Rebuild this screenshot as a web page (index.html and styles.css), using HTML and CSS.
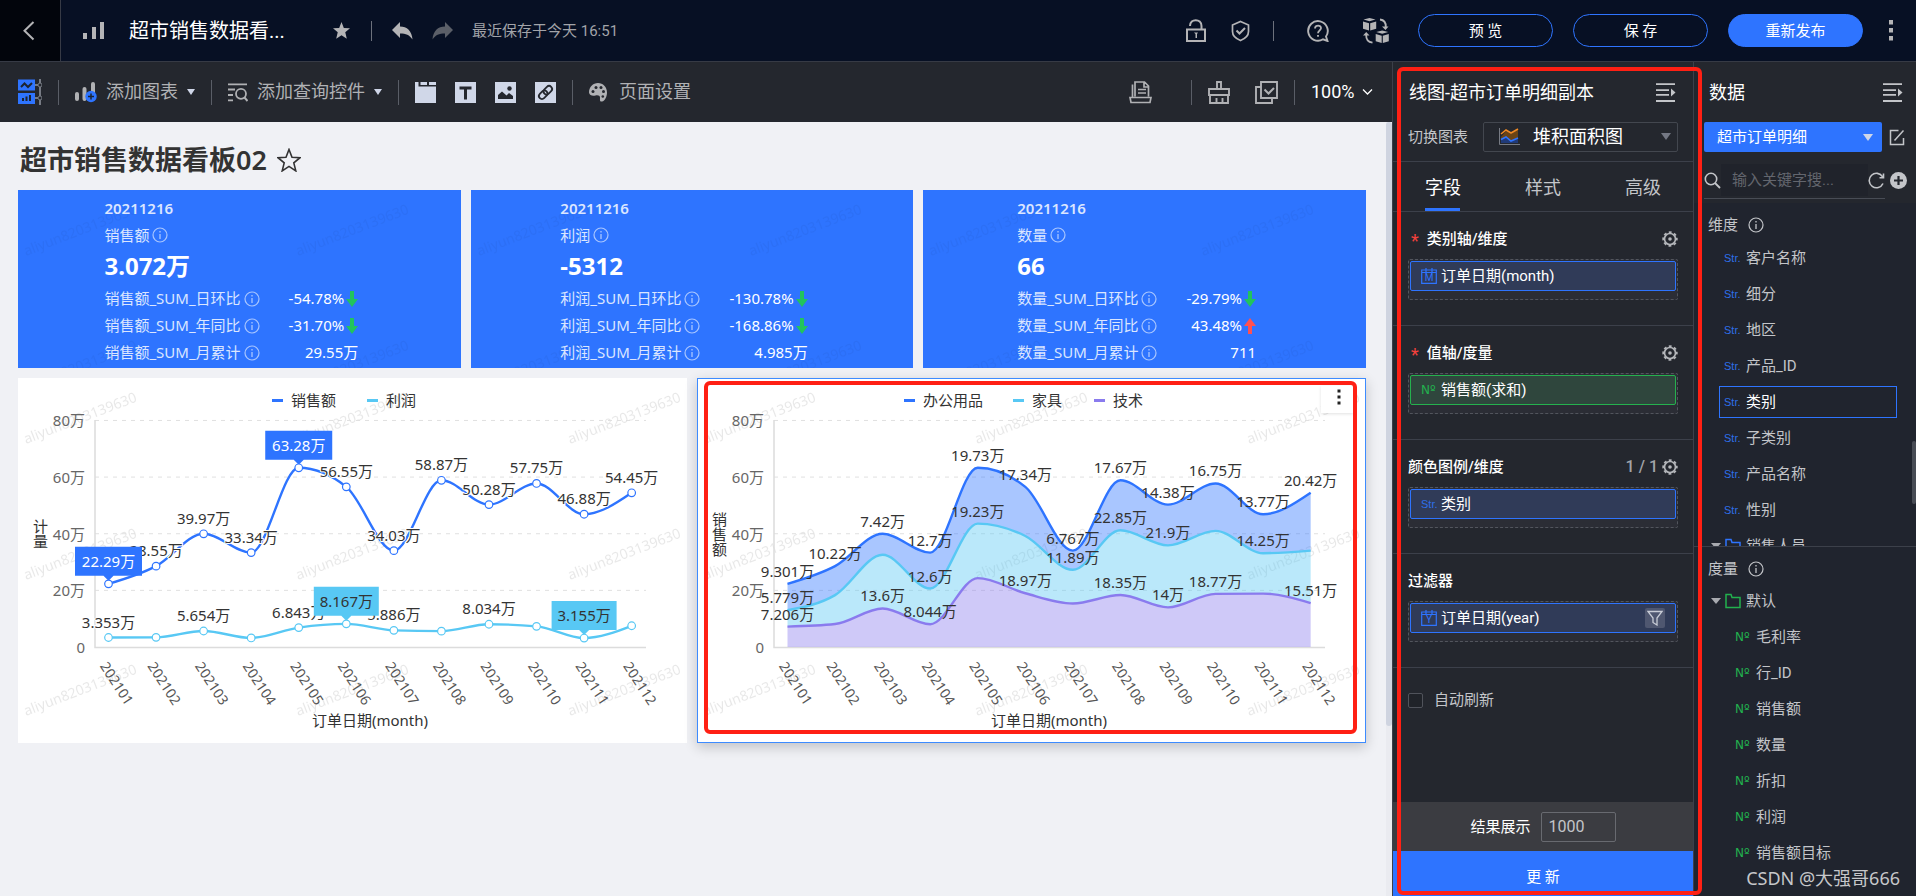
FILE: index.html
```html
<!DOCTYPE html>
<html lang="zh-CN">
<head>
<meta charset="utf-8">
<title>超市销售数据看板</title>
<link rel="stylesheet" href="styles.css">
</head>
<body>
<svg class="defs" width="0" height="0" aria-hidden="true">
  <defs>
    <pattern id="wm" width="272" height="136" patternUnits="userSpaceOnUse"><text class="wm-text" transform="translate(8 66) rotate(-21)">aliyun8203139630</text></pattern>
    <symbol id="info" viewBox="0 0 16 16"><circle cx="8" cy="8" r="7" fill="none" stroke="currentColor" stroke-width="1.200"/><path d="M8 4v1.600M8 7v5" stroke="currentColor" stroke-width="1.300"/></symbol>
    <symbol id="arrow" viewBox="0 0 12 16"><path d="M4 0h4v8h4l-6 8-6-8h4z" fill="currentColor"/></symbol>
    <symbol id="gear" viewBox="0 0 16 16"><circle cx="8" cy="8" r="5.500" fill="none" stroke="currentColor" stroke-width="1.700"/><circle cx="8" cy="8" r="6.800" fill="none" stroke="currentColor" stroke-width="1.800" stroke-dasharray="2.900 2.440" stroke-dashoffset="1.450"/><circle cx="8" cy="8" r="1.800" fill="currentColor"/></symbol>
    <symbol id="collapse" viewBox="0 0 20 20"><path d="M0 1.200h19M0 7.200h13M0 11.800h13M0 18h19" stroke="currentColor" stroke-width="1.800"/><path d="M15 5.500v8l4.500-4z" fill="currentColor"/></symbol>
    <symbol id="folder" viewBox="0 0 16 16"><path d="M1 14.500V1.500h5l1 3h8v10z" fill="none" stroke="currentColor" stroke-width="1.500"/></symbol>
  </defs>
</svg>
<div class="app">
  <header class="topbar">
    <button class="back" aria-label="返回"><svg width="14" height="20" viewBox="0 0 14 20"><path d="M11.500 1 2.500 9.800l9 8.700" fill="none" stroke="currentColor" stroke-width="2"/></svg></button>
    <svg class="bars" width="22" height="18" viewBox="0 0 22 18"><path d="M0 11h4v6H0zM9 5h4v12H9zM17 0h4v17h-4z" fill="currentColor"/></svg>
    <h1 class="doc-title">超市销售数据看...</h1>
    <svg class="fav" width="17" height="17" viewBox="0 0 24 24"><path d="m12 0 3.300 8.300 8.700.6-6.700 5.700L19.500 23.500 12 18.600 4.500 23.500l2.200-8.900L0 8.900l8.700-.6z" fill="currentColor"/></svg>
    <span class="rule"></span>
    <div class="history">
      <button aria-label="撤销"><svg width="21" height="18" viewBox="0 0 21 18"><path d="M8 0v4.500c7 0 12 4.500 12.500 13C17.500 13 14 11.500 8 11.500V16L0 8z" fill="currentColor"/></svg></button>
      <button class="dim" aria-label="重做"><svg width="21" height="18" viewBox="0 0 21 18"><path d="M13 0v4.500C6 4.500 1 9 .5 17.500 3.500 13 7 11.500 13 11.500V16l8-8z" fill="currentColor"/></svg></button>
    </div>
    <span class="saved">最近保存于今天 16:51</span>
    <div class="top-right">
      <div class="top-icons">
        <svg width="20" height="23" viewBox="0 0 20 23"><path d="M1 10.500h18v11.500H1zM4 7C4 -.8 15.500 -.8 15.500 7v3" fill="none" stroke="currentColor" stroke-width="2"/><path d="M8 13.500h4L11 15v4H9.500v-4z" fill="currentColor"/></svg>
        <svg width="19" height="22" viewBox="0 0 19 22"><path d="M9.500 1.500 17.500 5v6.500c0 4-3 7-8 9-5-2-8-5-8-9V5z" fill="none" stroke="currentColor" stroke-width="1.700"/><path d="m5.500 10.500 3 3 5.500-5.500" fill="none" stroke="currentColor" stroke-width="2"/></svg>
      </div>
      <span class="rule"></span>
      <svg class="help" width="22" height="22" viewBox="0 0 22 22"><path d="M19 16.500A9.800 9.800 0 1 0 16 19.300L20.500 21z" fill="none" stroke="currentColor" stroke-width="1.900"/><path d="M8 8.500C8 4.500 14.200 4.700 14 8.300 13.900 10.200 11 10.600 11 13.200M11 15v1.800" fill="none" stroke="currentColor" stroke-width="1.800"/></svg>
      <svg class="cubes" width="26" height="26" viewBox="0 0 26 26"><path d="m6.500 0 6 1.500-6 1.800L.5 1.500zM0 3.500 6 5.200v7.300L0 10.800zM7.200 5.200l6-1.700v7.300l-6 1.700zM19.200 12.500l6 1.500-6 1.800-6-1.800zM12.700 16l6 1.700V25l-6-1.700zM19.800 17.700l6-1.700v7.300l-6 1.700zM19 8.500h6.500L22.500 12zM0 17.500h6.500L3.200 14z" fill="currentColor"/><path d="M17 1.500c4 .5 6 3 5.800 7.500M9.500 24.700C5 24 3 21.500 3.200 17" fill="none" stroke="currentColor" stroke-width="1.800"/></svg>
      <div class="actions">
        <button class="pill">预 览</button>
        <button class="pill">保 存</button>
        <button class="pill pill-main">重新发布</button>
      </div>
      <button class="more" aria-label="更多"><svg width="8" height="21" viewBox="0 0 8 21"><path d="M2 0h4v4.500H2zM2 8h4v4.500H2zM2 16h4v4.500H2z" fill="currentColor"/></svg></button>
    </div>
  </header>

  <div class="workspace">
    <main class="editor">
      <div class="toolbar">
        <svg width="24" height="26" viewBox="0 0 24 26"><path d="M0 .5h17v11H0zM0 14h17v11H0z" fill="#2e74ff"/><path d="m3 8 3.500-3.500L10 8l4-4M5 22v-3M8.500 22v-4.500M12 22v-6" fill="none" stroke="#1c2430" stroke-width="2"/><path d="M22 0v26M17 6h3M17 19h3" stroke="#777b84" stroke-width="2"/><circle cx="22" cy="6" r="2" fill="#24272e" stroke="#777b84"/><circle cx="22" cy="19" r="2" fill="#24272e" stroke="#777b84"/></svg>
        <span class="rule"></span>
        <button class="tool">
          <svg width="22" height="21" viewBox="0 0 22 21"><path d="M2 12v5M9.500 7v10M18 2v9" stroke="currentColor" stroke-width="4" stroke-linecap="round"/><circle cx="16" cy="14.500" r="5.700" fill="#2e74ff"/><path d="M16 11.500v6M13 14.500h6" stroke="#1c2430" stroke-width="1.500"/></svg>
          添加图表<i class="caret"></i></button>
        <span class="rule"></span>
        <button class="tool">
          <svg width="20" height="19" viewBox="0 0 20 19"><path d="M0 1.300h19M0 6.500h7M0 12h5M0 17.300h5" stroke="currentColor" stroke-width="1.800"/><circle cx="13" cy="10.800" r="5" fill="none" stroke="currentColor" stroke-width="1.800"/><path d="m16.500 14.500 3 3.500" stroke="currentColor" stroke-width="2"/></svg>
          添加查询控件<i class="caret"></i></button>
        <span class="rule"></span>
        <div class="widgets">
          <button aria-label="标签页"><svg width="21" height="21" viewBox="0 0 21 21"><path d="M0 0h3.500v4.500H21V21H0zM5.500 0H12v3H5.500zM14 0h7v3h-7z" fill="currentColor"/></svg></button>
          <button aria-label="文本"><svg width="21" height="21" viewBox="0 0 21 21"><path d="M0 0h21v21H0z" fill="currentColor"/><path d="M4.500 6h12M10.500 6v11.500" stroke="#24272e" stroke-width="3"/></svg></button>
          <button aria-label="图片"><svg width="21" height="21" viewBox="0 0 21 21"><path d="M0 0h21v21H0z" fill="currentColor"/><path d="m3 17 0-4 4-3.500 4.500 4L14 11l4 3v3z" fill="#24272e"/><circle cx="14.500" cy="6.500" r="2.200" fill="#24272e"/></svg></button>
          <button aria-label="链接"><svg width="21" height="21" viewBox="0 0 21 21"><path d="M0 0h21v21H0z" fill="currentColor"/><g transform="rotate(-45 10.500 10.500)" fill="none" stroke="#24272e" stroke-width="1.800"><rect x="2.500" y="7.500" width="9.500" height="6" rx="3"/><rect x="9" y="7.500" width="9.500" height="6" rx="3"/></g></svg></button>
        </div>
        <span class="rule"></span>
        <button class="tool tool-page">
          <svg width="18" height="19" viewBox="0 0 18 19"><path d="M9 0c5 0 9 4 9 9.500 0 4-2 8.500-5 9-2.500.500-2-2-2-4s-2-2.500-4.500-2-6 .500-6.500-3C0 4 4 0 9 0z" fill="currentColor"/><g fill="#24272e"><circle cx="4" cy="8.500" r="1.500"/><circle cx="7" cy="4.500" r="1.500"/><circle cx="12" cy="4.500" r="1.500"/><circle cx="14.500" cy="8.500" r="1.500"/><circle cx="13.800" cy="13.500" r="1.300"/></g></svg>
          页面设置</button>
        <div class="tools-right">
          <svg class="doc-icon" width="23" height="23" viewBox="0 0 23 23"><path d="M3.500 16V3.500M6 15.500V1h9.500L19.500 5v10.500M15 1v5h4.500M1 16.500h21l-1 5H2zM9 8.500h8M9 12h8" fill="none" stroke="currentColor" stroke-width="1.700"/></svg>
          <span class="rule"></span>
          <svg width="22" height="23" viewBox="0 0 22 23"><path d="M9 8V1h4v7M1 8h20v6H1zM2 14v8h18v-8M8.500 22v-5M14.500 22v-5" fill="none" stroke="currentColor" stroke-width="1.900"/></svg>
          <svg class="stack-icon" width="23" height="23" viewBox="0 0 23 23"><path d="M6 1h16v16H6zM6 6H1v16h16v-5" fill="none" stroke="currentColor" stroke-width="1.900"/><path d="m9.500 8.500 4 4L19 7" fill="none" stroke="currentColor" stroke-width="2"/></svg>
          <span class="rule"></span>
          <span class="zoom"><select aria-label="缩放"><option>100%</option></select><svg width="11" height="8" viewBox="0 0 11 8"><path d="m1 1.500 4.500 4.500L10 1.500" fill="none" stroke="currentColor" stroke-width="1.300"/></svg></span>
        </div>
      </div>

      <div class="canvas">
        <div class="board">
          <h2 class="board-title">超市销售数据看板02 <svg width="24" height="24" viewBox="0 0 24 24"><path d="m12 1.500 3 7.700 8 .5-6.200 5.200 2 8L12 18.400l-6.800 4.500 2-8L1 9.700l8-.5z" fill="none" stroke="currentColor" stroke-width="1.600"/></svg></h2>
          <section class="kpis">
            <article class="kpi">
              <svg class="wm wm-dark"><rect width="100%" height="100%" fill="url(#wm)"/></svg>
              <div class="kpi-body">
                <p class="kpi-date">20211216</p>
                <p class="kpi-name">销售额 <svg class="info"><use href="#info"/></svg></p>
                <p class="kpi-value">3.072万</p>
                <dl class="kpi-rows">
                  <dt>销售额_SUM_日环比 <svg class="info"><use href="#info"/></svg></dt><dd>-54.78%<svg class="down"><use href="#arrow"/></svg></dd>
                  <dt>销售额_SUM_年同比 <svg class="info"><use href="#info"/></svg></dt><dd>-31.70%<svg class="down"><use href="#arrow"/></svg></dd>
                  <dt>销售额_SUM_月累计 <svg class="info"><use href="#info"/></svg></dt><dd>29.55万</dd>
                </dl>
              </div>
            </article>
            <article class="kpi">
              <svg class="wm wm-dark"><rect width="100%" height="100%" fill="url(#wm)"/></svg>
              <div class="kpi-body">
                <p class="kpi-date">20211216</p>
                <p class="kpi-name">利润 <svg class="info"><use href="#info"/></svg></p>
                <p class="kpi-value">-5312</p>
                <dl class="kpi-rows">
                  <dt>利润_SUM_日环比 <svg class="info"><use href="#info"/></svg></dt><dd>-130.78%<svg class="down"><use href="#arrow"/></svg></dd>
                  <dt>利润_SUM_年同比 <svg class="info"><use href="#info"/></svg></dt><dd>-168.86%<svg class="down"><use href="#arrow"/></svg></dd>
                  <dt>利润_SUM_月累计 <svg class="info"><use href="#info"/></svg></dt><dd>4.985万</dd>
                </dl>
              </div>
            </article>
            <article class="kpi">
              <svg class="wm wm-dark"><rect width="100%" height="100%" fill="url(#wm)"/></svg>
              <div class="kpi-body">
                <p class="kpi-date">20211216</p>
                <p class="kpi-name">数量 <svg class="info"><use href="#info"/></svg></p>
                <p class="kpi-value">66</p>
                <dl class="kpi-rows">
                  <dt>数量_SUM_日环比 <svg class="info"><use href="#info"/></svg></dt><dd>-29.79%<svg class="down"><use href="#arrow"/></svg></dd>
                  <dt>数量_SUM_年同比 <svg class="info"><use href="#info"/></svg></dt><dd>43.48%<svg class="up"><use href="#arrow"/></svg></dd>
                  <dt>数量_SUM_月累计 <svg class="info"><use href="#info"/></svg></dt><dd>711</dd>
                </dl>
              </div>
            </article>
          </section>
          <section class="charts">
            <article class="chart-card"><svg id="line-chart" class="chart" viewBox="0 0 669 365" role="img" aria-label="销售额与利润"></svg></article>
            <article class="chart-card is-active"><svg id="area-chart" class="chart" viewBox="0 0 669 365" role="img" aria-label="堆积面积图"></svg>
              <button class="card-more" aria-label="更多操作"><svg width="4" height="16" viewBox="0 0 4 16"><path d="M.5.500h3v3h-3zM.5 6.500h3v3h-3zM.5 12.500h3v3h-3z" fill="#222"/></svg></button>
              <span class="mark mark-chart"></span>
            </article>
          </section>
        </div>
        <div class="scroll"><span class="thumb"></span></div>
      </div>
    </main>

    <aside class="config">
      <div class="panel-head"><h3>线图-超市订单明细副本</h3><svg width="20" height="20"><use href="#collapse"/></svg></div>
      <div class="switch">
        <label for="chart-type">切换图表</label>
        <span class="type-select">
          <svg class="type-icon" width="21" height="17" viewBox="0 0 21 17"><path d="M2 9l5-6 5 3 7-5v9l-7 3-5-4-5 4z" fill="#6b4415"/><path d="M2 12l5-3 5 4 7-3v5H2z" fill="#203a78"/><path d="M2 6l5-4 5 3 7-4" fill="none" stroke="#f08a24" stroke-width="1.600"/><path d="m2 11.500 5-2.500 5 4 7-3" fill="none" stroke="#2e74ff" stroke-width="1.600"/><path d="M.5 0v16.500H21" fill="none" stroke="#777b84"/></svg>
          <select id="chart-type"><option>堆积面积图</option></select><i class="caret"></i>
        </span>
      </div>
      <nav class="tabs"><button class="tab on">字段</button><button class="tab">样式</button><button class="tab">高级</button></nav>
      <section class="field">
        <h4><b class="req">*</b>类别轴/维度<svg class="gear"><use href="#gear"/></svg></h4>
        <div class="drop"><div class="chip"><svg class="date" width="16" height="16" viewBox="0 0 16 16"><path d="M.700 2h14.600v13.300H.700zM1 4.500h14M5 0v4M11 0v4" fill="none" stroke="currentColor" stroke-width="1.200"/><text x="8" y="13">M</text></svg>订单日期(month)</div></div>
      </section>
      <section class="field">
        <h4><b class="req">*</b>值轴/度量<svg class="gear"><use href="#gear"/></svg></h4>
        <div class="drop"><div class="chip chip-green"><span class="no">Nº</span>销售额(求和)</div></div>
      </section>
      <section class="field">
        <h4>颜色图例/维度<span class="count">1 / 1</span><svg class="gear"><use href="#gear"/></svg></h4>
        <div class="drop"><div class="chip"><span class="str">Str.</span>类别</div></div>
      </section>
      <section class="field">
        <h4>过滤器</h4>
        <div class="drop"><div class="chip"><svg class="date" width="16" height="16" viewBox="0 0 16 16"><path d="M.700 2h14.600v13.300H.700zM1 4.500h14M5 0v4M11 0v4" fill="none" stroke="currentColor" stroke-width="1.200"/><text x="8" y="13">Y</text></svg>订单日期(year)<button class="funnel" aria-label="筛选"><svg width="16" height="16" viewBox="0 0 16 16"><path d="M1 1.500h14L10 8v7l-4-2.500V8z" fill="none" stroke="currentColor" stroke-width="1.300"/></svg></button></div></div>
      </section>
      <label class="auto"><input type="checkbox">自动刷新</label>
      <div class="result"><label for="rows">结果展示</label><input id="rows" type="text" value="1000"></div>
      <button class="update">更 新</button>
      <span class="mark mark-config"></span>
    </aside>

    <aside class="data">
      <div class="panel-head"><h3>数据</h3><svg width="20" height="20"><use href="#collapse"/></svg></div>
      <div class="source">
        <span class="source-select"><select aria-label="数据集"><option>超市订单明细</option></select><i class="caret"></i></span>
        <button aria-label="编辑"><svg width="17" height="17" viewBox="0 0 17 17"><path d="M9.500 1.500H1.500v14h13V9" fill="none" stroke="currentColor" stroke-width="1.500"/><path d="M5.500 11.500 14.500 1.500" stroke="currentColor" stroke-width="1.500"/></svg></button>
      </div>
      <div class="search">
        <span class="search-box"><svg width="17" height="17" viewBox="0 0 17 17"><circle cx="7" cy="7" r="5.700" fill="none" stroke="currentColor" stroke-width="1.600"/><path d="m11 11 5 5" stroke="currentColor" stroke-width="1.800"/></svg>
        <input type="text" aria-label="搜索字段" placeholder="输入关键字搜...">
        <svg width="17" height="17" viewBox="0 0 17 17"><path d="M14.600 4.800A7.200 7.200 0 1 0 15 11.500M15.500 1.500v4.200h-4" fill="none" stroke="currentColor" stroke-width="1.600"/></svg></span>
        <button aria-label="新建"><svg width="17" height="17" viewBox="0 0 17 17"><circle cx="8.500" cy="8.500" r="8.500" fill="currentColor"/><path d="M8.500 4v9M4 8.500h9" stroke="#24272e" stroke-width="2.200"/></svg></button>
      </div>
      <section class="dims">
        <h4>维度<svg class="info"><use href="#info"/></svg></h4>
        <ul>
          <li><span class="str">Str.</span>客户名称</li>
          <li><span class="str">Str.</span>细分</li>
          <li><span class="str">Str.</span>地区</li>
          <li><span class="str">Str.</span>产品_ID</li>
          <li class="on"><span class="str">Str.</span>类别</li>
          <li><span class="str">Str.</span>子类别</li>
          <li><span class="str">Str.</span>产品名称</li>
          <li><span class="str">Str.</span>性别</li>
          <li class="folder"><i class="caret"></i><svg class="fold-blue" width="16" height="16"><use href="#folder"/></svg>销售人员</li>
        </ul>
        <span class="list-thumb"></span>
      </section>
      <section class="measures">
        <h4>度量<svg class="info"><use href="#info"/></svg></h4>
        <ul>
          <li class="folder"><i class="caret"></i><svg class="fold-green" width="16" height="16"><use href="#folder"/></svg>默认</li>
          <li><span class="no">Nº</span>毛利率</li>
          <li><span class="no">Nº</span>行_ID</li>
          <li><span class="no">Nº</span>销售额</li>
          <li><span class="no">Nº</span>数量</li>
          <li><span class="no">Nº</span>折扣</li>
          <li><span class="no">Nº</span>利润</li>
          <li><span class="no">Nº</span>销售额目标</li>
        </ul>
        <p class="credit">CSDN @大强哥666</p>
      </section>
    </aside>
  </div>
</div>
<script src="charts.js"></script>
</body>
</html>
```

FILE: styles.css
```css
* { box-sizing: border-box; }
body { margin: 0; font: 15px/20px Roboto, "Noto Sans CJK SC", sans-serif; color: #c3c5c9; background: #24272e; }
h1, h2, h3, h4, p, dl, dd, ul { margin: 0; padding: 0; font-weight: 400; }
ul { list-style: none; }
svg { display: block; flex: none; }
button { margin: 0; padding: 0; border: 0; background: none; color: inherit; font: inherit; cursor: pointer; }
select, input { font: inherit; color: inherit; }
select { appearance: none; border: 0; background: none; padding: 0; }
.defs { position: absolute; }
.app { display: flex; flex-direction: column; height: 100vh; overflow: hidden; }
.rule { flex: none; width: 1px; height: 20px; background: #6c717c; }
.caret { flex: none; border: 5px solid transparent; border-top: 7px solid #cfd6e8; border-bottom: 0; }

.topbar { display: flex; align-items: center; flex: none; height: 62px; background: #071024; border-bottom: 1px solid #363a45; color: #b4b4b6; }
.back { display: flex; align-items: center; justify-content: center; width: 61px; height: 61px; padding-right: 3px; background: #02050c; border-right: 1px solid #363a45; }
.bars { margin-left: 22px; }
.doc-title { margin-left: 24px; width: 204px; font-size: 20px; line-height: 28px; color: #fff; }
.fav { margin-right: 21px; }
.history { display: flex; gap: 19px; margin: 0 19px 0 20px; }
.history .dim { color: #5b5f68; }
.saved { color: #a2a4a9; }
.top-right { display: flex; align-items: center; margin-left: auto; padding-right: 21px; }
.top-icons { display: flex; align-items: center; gap: 25px; margin-right: 23px; }
.help { margin: 0 34px 0 33px; }
.actions { display: flex; gap: 20px; margin: 0 24px 0 29px; }
.pill { width: 135px; height: 33px; border: 1px solid #2e74ff; border-radius: 17px; color: #fff; }
.pill-main { background: #2e74ff; }

.workspace { display: flex; flex: 1; min-height: 0; }
.editor { display: flex; flex-direction: column; flex: 1; min-width: 0; }
.toolbar { display: flex; align-items: center; flex: none; height: 60px; padding: 0 19px 0 18px; color: #b0b1b4; }
.toolbar .rule { height: 25px; margin: 0 16px; background: #5a5e67; }
.toolbar .caret { border-width: 6px 4px 0; }
.tool { display: flex; align-items: center; gap: 9px; font-size: 18px; line-height: 24px; white-space: nowrap; }
.tool-page { gap: 12px; }
.widgets { display: flex; gap: 19px; color: #d0d7e8; }
.tools-right { display: flex; align-items: center; margin-left: auto; }
.doc-icon { margin-right: 23px; }
.stack-icon { margin-left: 25px; }
.zoom { display: flex; align-items: center; gap: 3px; width: 62px; color: #fff; font-size: 18px; }
.zoom select { width: 48px; }

.canvas { display: flex; flex: 1; min-height: 0; background: #f0f1f5; font-family: "Noto Sans", "Noto Sans CJK SC", sans-serif; }
.board { flex: 1; min-width: 0; padding: 0 20px 0 18px; }
.scroll { flex: none; width: 6px; background: #eaebf0; }
.thumb { display: block; height: 78%; border-radius: 3px; background: #cfd4e0; }
.board-title { display: flex; align-items: center; gap: 10px; height: 68px; padding: 8px 0 0 2px; font-size: 27px; line-height: 36px; font-weight: 600; color: #333; }
.kpis { display: grid; grid-template-columns: repeat(3, 1fr); gap: 10px; }
.kpi { position: relative; height: 178px; display: flex; justify-content: center; padding: 7px 16px 6px 0; background: #2e74ff; color: #fff; overflow: hidden; }
.wm { position: absolute; inset: 0; width: 100%; height: 100%; }
.wm-dark { opacity: .4; }
.wm-text { font: 14px "Noto Sans", sans-serif; fill: #000; fill-opacity: .09; }
.kpi-body { position: relative; overflow: hidden; }
.kpi-date { line-height: 22px; font-weight: 600; color: #dbe6ff; }
.kpi-name { display: flex; align-items: center; gap: 3px; line-height: 32px; color: #dbe6ff; }
.kpi-value { font-size: 24px; line-height: 30px; font-weight: 700; }
.kpi-rows { display: grid; grid-template-columns: auto auto; column-gap: 29px; padding-top: 4px; line-height: 27px; }
.kpi-rows dt { display: flex; align-items: center; gap: 3px; color: #dbe6ff; }
.kpi-rows dd { display: flex; align-items: center; justify-content: flex-end; gap: 2px; }
.info { width: 16px; height: 16px; }
.kpi .info { color: #a9c6ff; }
.down, .up { width: 12px; height: 16px; color: #22c35e; }
.up { color: #ff5050; transform: rotate(180deg); }

.charts { display: grid; grid-template-columns: 1fr 1fr; gap: 10px; margin-top: 10px; }
.chart-card { position: relative; background: #fff; }
.chart-card.is-active { outline: 1px solid #3d8bff; outline-offset: -1px; box-shadow: 0 4px 12px rgba(0, 0, 0, .2); }
.chart { width: 100%; height: auto; font-size: 15px; }
.chart text { fill: #333; text-anchor: middle; }
.chart .start { text-anchor: start; }
.chart .y-tick { text-anchor: end; fill: #666; }
.chart .x-tick { text-anchor: start; fill: #555; font-size: 14px; }
.chart .y-name { writing-mode: vertical-rl; }
.chart .halo { stroke: #fff; stroke-width: 2px; paint-order: stroke; }
.chart .on-blue { fill: #fff; }
.card-more { position: absolute; right: 13px; top: 8px; width: 32px; height: 27px; padding-left: 3px; padding-bottom: 6px; display: flex; align-items: center; justify-content: center; background: #fff; box-shadow: 0 1px 3px rgba(0, 0, 0, .12); }
.mark { position: absolute; border: 4px solid #ff2014; border-radius: 6px; pointer-events: none; z-index: 2; }
.mark-chart { inset: 3px 9px 9px 7px; }
.mark-config { inset: 5px -9px 1px 4px; }

.config { position: relative; display: flex; flex-direction: column; flex: none; width: 301px; border-left: 1px solid #3c404a; background: #24272e; }
.panel-head { display: flex; align-items: center; justify-content: space-between; height: 60px; padding: 1px 17px 0 16px; }
.panel-head h3 { font-size: 18px; color: #fff; }
.switch { display: flex; align-items: center; justify-content: space-between; height: 40px; padding: 0 15px 10px; border-bottom: 1px solid #3c404a; }
.type-select { position: relative; display: flex; align-items: center; width: 195px; height: 30px; padding: 0 6px 0 15px; gap: 13px; border: 1px solid #43474f; border-radius: 2px; color: #fff; font-size: 18px; }
.type-select select { flex: 1; min-width: 0; }
.type-select .caret { border-top-color: #747884; }
.tabs { display: flex; height: 50px; border-bottom: 1px solid #3c404a; }
.tab { position: relative; flex: 1; padding-top: 2px; font-size: 18px; }
.tab.on { color: #fff; }
.tab.on::after { content: ""; position: absolute; left: 50%; bottom: 0; width: 35px; height: 3px; margin-left: -18px; background: #2e74ff; }
.field { height: 114px; padding: 17px 15px 0; border-bottom: 1px solid #3c404a; }
.field h4 { display: flex; align-items: center; height: 20px; color: #fff; font-weight: 500; }
.req { margin: 3px 8px 0 3px; font-size: 18px; font-weight: 400; color: #f5413c; }
.gear { width: 16px; height: 16px; margin-left: auto; color: #b4b6ba; }
.count { margin-left: auto; font-size: 16px; color: #a2a4a9; }
.count + .gear { margin-left: 4px; }
.drop { height: 41px; margin-top: 10px; padding: 1px; border: 1px dashed #52555d; border-radius: 2px; background: #2b2d35; }
.chip { display: flex; align-items: center; gap: 4px; height: 30px; padding: 0 10px; border: 1px solid #2e74ff; border-radius: 2px; background: #303b58; color: #fff; }
.chip-green { border-color: #25b14e; background: #2f463d; }
.date { color: #2e74ff; }
.date text { font: 10px Roboto, sans-serif; text-anchor: middle; fill: #2e74ff; }
.str, .no { flex: none; width: 18px; font: 11px/16px "Liberation Sans", sans-serif; color: #2e6fe8; white-space: nowrap; }
.chip .str, .chip .no { width: 16px; }
.no { width: 16px; color: #22b14e; font: 12px/16px "DejaVu Sans", sans-serif; }
.funnel { display: flex; align-items: center; justify-content: center; width: 20px; height: 20px; margin-left: auto; background: #4f5770; border-radius: 2px; color: #c8ccd6; }
.auto { display: flex; align-items: center; gap: 11px; padding: 22px 15px; }
.auto input { appearance: none; width: 15px; height: 15px; margin: 0; border: 1px solid #50535b; border-radius: 2px; background: #202329; }
.result { display: flex; align-items: center; justify-content: center; gap: 10px; height: 49px; margin-top: auto; background: #3b3c41; color: #fff; }
.result input { width: 75px; height: 30px; padding: 0 7px; border: 1px solid #686a70; border-radius: 2px; background: none; color: #c3c5c9; font-size: 16px; }
.update { height: 45px; padding-top: 7px; background: #2e74ff; color: #fff; }

.data { display: flex; flex-direction: column; flex: none; width: 223px; min-height: 0; border-left: 1px solid #3c404a; }
.data .panel-head { padding: 1px 13px 0 15px; }
.source { display: flex; align-items: center; gap: 7px; padding-left: 10px; }
.source-select { display: flex; align-items: center; width: 178px; height: 30px; padding: 0 9px 0 13px; border-radius: 2px; background: #2e74ff; color: #fff; }
.source-select select { flex: 1; }
.search { display: flex; align-items: center; gap: 5px; height: 51px; padding: 10px 0 4px 10px; }
.search-box { display: flex; align-items: center; width: 181px; height: 37px; border-bottom: 1px solid #484c55; }
.search-box input { flex: 1; min-width: 0; height: 32px; padding: 0 11px; border: 0; background: #20232b; }
.search-box input::placeholder { color: #63666e; }
.dims, .measures { position: relative; background: #20242e; overflow: hidden; }
.dims { flex: none; height: 344px; border-bottom: 1px solid #3c404a; }
.measures { flex: 1; }
.data h4 { display: flex; align-items: center; gap: 10px; height: 20px; margin: 12px 0 7px 14px; }
.data h4 .info { color: #c3c5c9; }
.data ul { display: grid; gap: 4px; margin: 0 19px 0 25px; }
.data li { display: flex; align-items: center; gap: 4px; height: 32px; padding-left: 5px; }
.data li.on { border: 1px solid #2e74ff; padding-left: 4px; color: #fff; }
.data li.folder { gap: 5px; margin-left: -8px; padding: 0; }
.data .measures li { padding-left: 16px; gap: 5px; }
.data .measures li.folder { padding-left: 0; }
.data .folder .caret { border-top: 6px solid #a8aab0; border-bottom: 0; margin-right: -1px; }
.fold-blue { color: #2e74ff; }
.fold-green { color: #22b14e; }
.list-thumb { position: absolute; right: 0; bottom: 42px; width: 4px; height: 63px; border-radius: 2px; background: #484c55; }
.measures h4 { margin-bottom: 6px; }
.credit { position: absolute; right: 16px; bottom: 7px; font: 18px/22px "Noto Sans", "Noto Sans CJK SC", sans-serif; color: #c6c7ca; }
```

FILE: charts.js
```js
const NS = 'http://www.w3.org/2000/svg';
const months = Array.from({ length: 12 }, (_, i) => String(202101 + i));
const X = i => 90.5 + i * 47.56;
const Y = v => 269 - v * 2.832;
const BLUE = '#2e74ff', CYAN = '#58c8f4', PURPLE = '#8a7bee';

function add(svg, tag, attrs, text) {
  const el = document.createElementNS(NS, tag);
  for (const k in attrs) el.setAttribute(k, attrs[k]);
  if (text !== undefined) el.textContent = text;
  svg.appendChild(el);
}

// Monotone cubic segments through the points, without the leading move.
function curve(pts) {
  const n = pts.length, s = [], m = [];
  for (let i = 0; i < n - 1; i++) s.push((pts[i + 1][1] - pts[i][1]) / (pts[i + 1][0] - pts[i][0]));
  for (let i = 1; i < n - 1; i++) {
    const p = (s[i - 1] + s[i]) / 2;
    m[i] = (Math.sign(s[i - 1]) + Math.sign(s[i])) * Math.min(Math.abs(s[i - 1]), Math.abs(s[i]), Math.abs(p) / 2) || 0;
  }
  m[0] = (3 * s[0] - m[1]) / 2;
  m[n - 1] = (3 * s[n - 2] - m[n - 2]) / 2;
  let d = '';
  for (let i = 0; i < n - 1; i++) {
    const [x0, y0] = pts[i], [x1, y1] = pts[i + 1], h = (x1 - x0) / 3;
    d += `C${x0 + h} ${y0 + h * m[i]} ${x1 - h} ${y1 - h * m[i + 1]} ${x1} ${y1}`;
  }
  return d;
}
const points = vals => vals.map((v, i) => [X(i), Y(v)]);

function frame(svg, name, legend) {
  add(svg, 'rect', { width: 669, height: 365, fill: 'url(#wm)' });
  for (let v = 0; v <= 80; v += 20) {
    if (v) add(svg, 'path', { d: `M77 ${Y(v)}H628`, stroke: '#e0e0e0', 'stroke-dasharray': '4 5' });
    add(svg, 'text', { class: 'y-tick', x: 67, y: Y(v) + 6 }, v ? v + '万' : '0');
  }
  add(svg, 'path', { d: 'M77 42V269.500H628', fill: 'none', stroke: '#dcdcdc', 'stroke-width': 1.5 });
  months.forEach((m, i) => add(svg, 'text', { class: 'x-tick', transform: `translate(${X(i) - 9} 288) rotate(57)` }, m));
  add(svg, 'text', { class: 'y-name', x: 22, y: 156 }, name);
  add(svg, 'text', { x: 352, y: 348 }, '订单日期(month)');
  legend.forEach(([x, t, c]) => {
    add(svg, 'rect', { x, y: 21, width: 11, height: 3, fill: c });
    add(svg, 'text', { class: 'start', x: x + 19, y: 28 }, t);
  });
}

function drawLines() {
  const svg = document.getElementById('line-chart');
  frame(svg, '计量', [[254, '销售额', BLUE], [349, '利润', CYAN]]);
  const series = [
    { c: BLUE, v: [22.29, 28.55, 39.97, 33.34, 63.28, 56.55, 34.03, 58.87, 50.28, 57.75, 46.88, 54.45], skip: [], tips: [0, 4], cls: 'on-blue', w: 67 },
    { c: CYAN, v: [3.353, 3.4, 5.654, 3.2, 6.843, 8.167, 5.886, 5.6, 8.034, 7.3, 3.155, 7.5], skip: [1, 3, 7, 9, 11], tips: [5, 10], cls: '', w: 65 }
  ];
  series.forEach(s => {
    const p = points(s.v);
    add(svg, 'path', { d: 'M' + p[0] + curve(p), fill: 'none', stroke: s.c, 'stroke-width': 2.4 });
  });
  series.forEach(s => s.v.forEach((v, i) => {
    if (!s.skip.includes(i) && !s.tips.includes(i)) add(svg, 'text', { class: 'halo', x: X(i), y: Y(v) - 10 }, v + '万');
  }));
  series.forEach(s => {
    s.tips.forEach(i => {
      const x = X(i), y = Y(s.v[i]);
      add(svg, 'path', { d: `M${x - s.w / 2} ${y - 37}h${s.w}v29H${x + 5}L${x} ${y - 3}L${x - 5} ${y - 8}H${x - s.w / 2}z`, fill: s.c });
      add(svg, 'text', { class: s.cls, x, y: y - 17 }, s.v[i] + '万');
    });
    s.v.forEach((v, i) => add(svg, 'circle', { cx: X(i), cy: Y(v), r: 3.8, fill: '#fff', stroke: s.c, 'stroke-width': 1.2 }));
  });
}

function drawAreas() {
  const svg = document.getElementById('area-chart');
  frame(svg, '销售额', [[207, '办公用品', BLUE], [316, '家具', CYAN], [397, '技术', PURPLE]]);
  const layers = [
    { c: PURPLE, v: [7.206, 8.1, 13.6, 8.044, 24.32, 18.97, 15.37, 18.35, 14, 18.77, 18.86, 15.51], t: ['7.206', , '13.6', '8.044', , '18.97', , '18.35', '14', '18.77', , '15.51'] },
    { c: CYAN, v: [12.99, 18.33, 32.55, 20.64, 43.55, 39.21, 27.26, 41.2, 35.9, 41, 33.11, 34.03], t: ['5.779', , , '12.6', '19.23', , '11.89', '22.85', '21.9', , '14.25'] },
    { c: BLUE, v: [22.29, 28.55, 39.97, 33.34, 63.28, 56.55, 34.03, 58.87, 50.28, 57.75, 46.88, 54.45], t: ['9.301', '10.22', '7.42', '12.7', '19.73', '17.34', '6.767', '17.67', '14.38', '16.75', '13.77', '20.42'] }
  ];
  let below = points(Array(12).fill(0));
  layers.forEach(l => {
    const p = points(l.v), back = [...below].reverse();
    add(svg, 'path', { d: `M${p[0]}${curve(p)}L${back[0]}${curve(back)}Z`, fill: l.c, 'fill-opacity': 0.41 });
    below = p;
  });
  layers.forEach(l => {
    const p = points(l.v);
    add(svg, 'path', { d: 'M' + p[0] + curve(p), fill: 'none', stroke: l.c, 'stroke-width': 2.4 });
  });
  layers.forEach(l => l.t.forEach((t, i) => add(svg, 'text', { x: X(i), y: Y(l.v[i]) - 7 }, t + '万')));
}

drawLines();
drawAreas();
```
